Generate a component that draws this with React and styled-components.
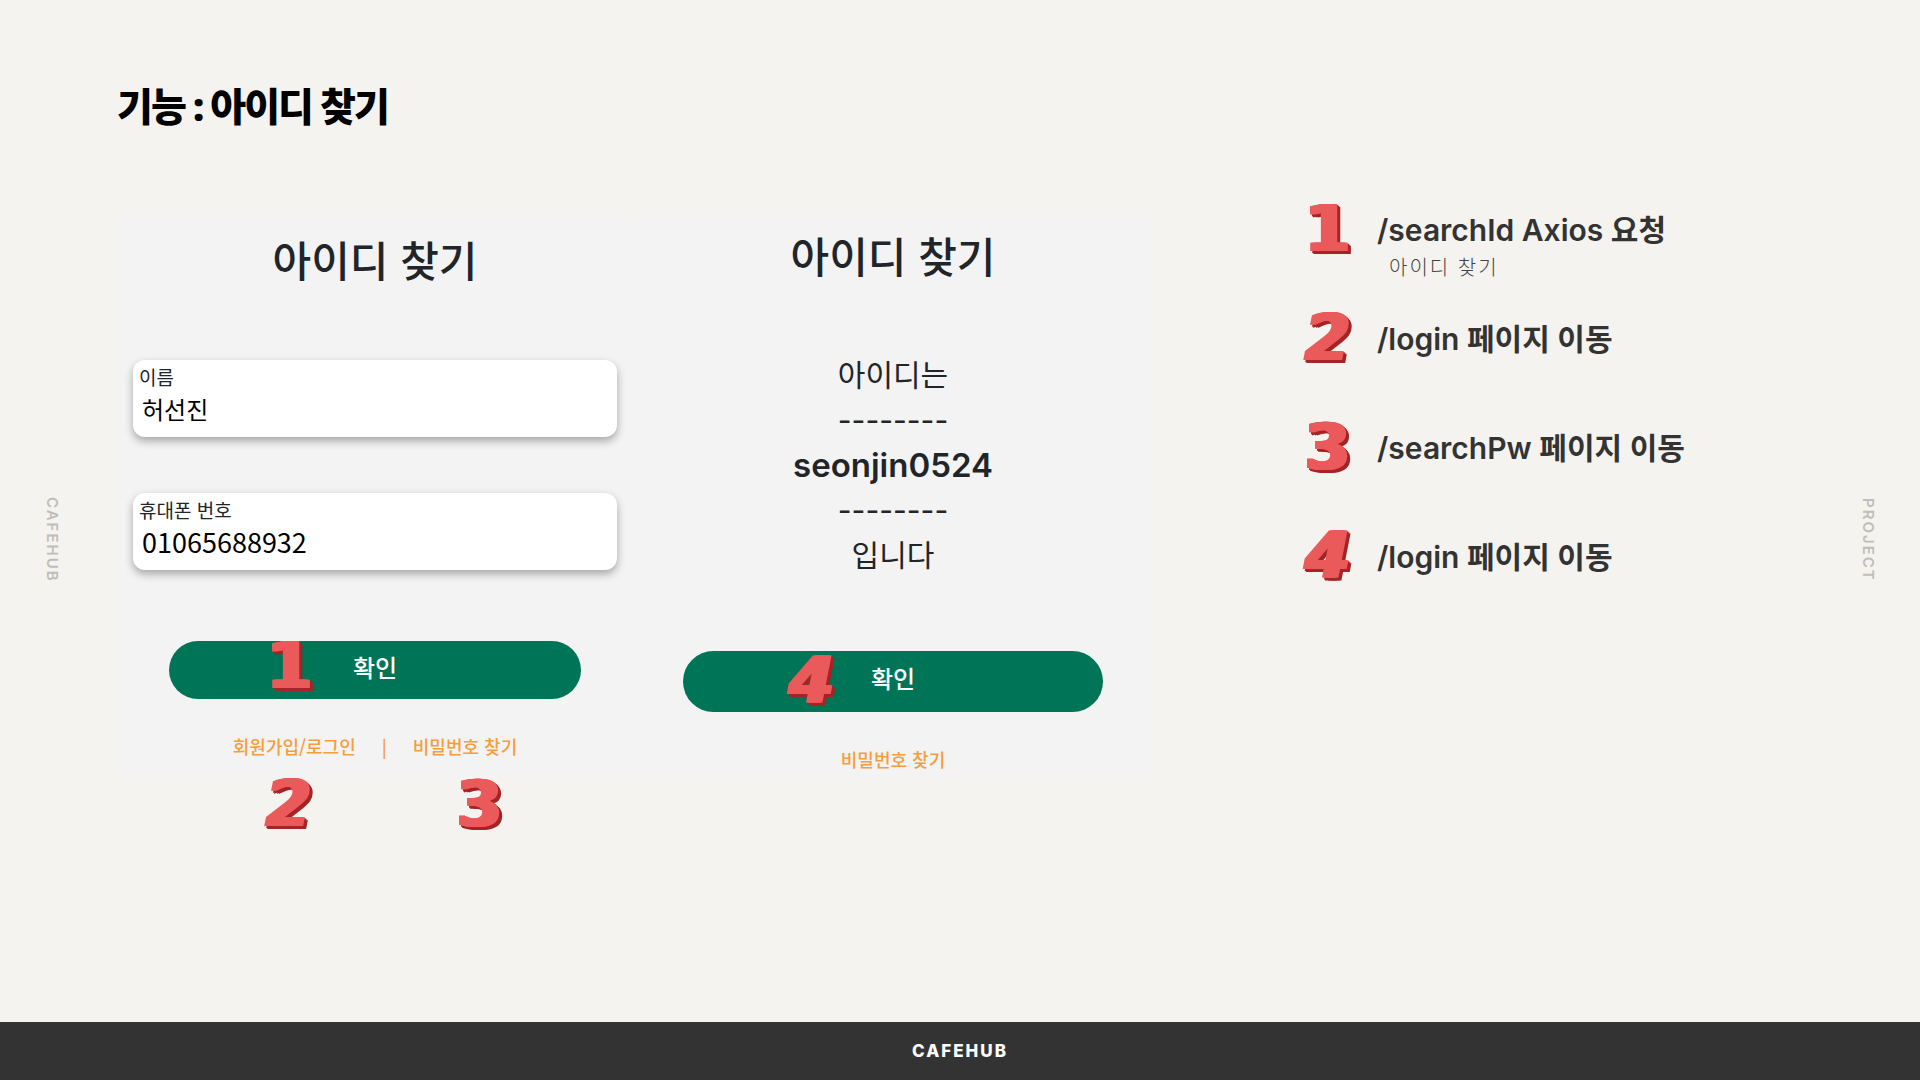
import React from "react";
import styled, { createGlobalStyle } from "styled-components";

const GlobalStyle = createGlobalStyle`
  * { box-sizing: border-box; }
  body {
    margin: 0;
    background: #f5f3ef;
    font-family: Inter, "Noto Sans CJK KR", sans-serif;
  }
  h1, h2, p, ol { margin: 0; padding: 0; }
`;

const korean = `"Noto Sans CJK KR", sans-serif`;

const Page = styled.div`
  min-height: 100vh;
  display: grid;
  grid-template-columns: 117px minmax(0, 1fr) 117px;
  grid-template-rows: 1fr 58px;
`;

const Side = styled.aside`
  display: flex;
  align-items: center;
  justify-content: ${(p) => (p.$end ? "flex-end" : "flex-start")};
  padding: 58px 42px 0;
  color: #bfbeba;
  font-size: 15px;
  line-height: 20px;
  font-weight: 600;
  letter-spacing: 2px;
`;

const SideText = styled.span`
  writing-mode: vertical-rl;
`;

const Content = styled.main`
  padding-top: 82px;
`;

const PageTitle = styled.h1`
  color: #000;
  font-family: "Noto Sans", ${korean};
  font-size: 39px;
  line-height: 48px;
  font-weight: 900;
  letter-spacing: -2px;
`;

const Columns = styled.div`
  display: grid;
  grid-template-columns: minmax(0, 1034fr) minmax(0, 500fr);
  gap: 152px;
  align-items: start;
  margin-top: 74px;
`;

const Screens = styled.div`
  display: grid;
  grid-template-columns: 1fr 1fr;
  gap: 2px;
  padding-top: 13px;
`;

const Screen = styled.section`
  position: relative;
  display: flex;
  flex-direction: column;
  padding: ${(p) => p.$padding};
  background: #f3f3f3;
  color: #212529;
  font-family: ${korean};
`;

const ScreenTitle = styled.h2`
  font-size: 42px;
  line-height: 48px;
  font-weight: 500;
  text-align: center;
`;

const Fields = styled.div`
  display: flex;
  flex-direction: column;
  gap: 56px;
  margin: 77px 16px 71px;
`;

const Field = styled.label`
  display: block;
  padding: 5px 6px 10px;
  border-radius: 12px;
  background: #fff;
  box-shadow: 0 4px 8px rgba(0, 0, 0, 0.32);
  font-size: 19px;
  line-height: 24px;
`;

const Input = styled.input`
  display: block;
  width: 100%;
  height: 38px;
  padding: 0 3px;
  border: 0;
  outline: 0;
  background: transparent;
  color: #000;
  font-family: ${korean};
  font-size: ${(p) => (p.type === "tel" ? 27 : 24)}px;
`;

const Confirm = styled.button`
  height: ${(p) => p.$height};
  margin: 0 ${(p) => p.$inset};
  padding: 0 0 8px;
  border: 0;
  border-radius: 32px;
  background: #007456;
  color: #fff;
  font-family: ${korean};
  font-size: 24px;
  font-weight: 500;
`;

const Links = styled.nav`
  display: flex;
  justify-content: center;
  gap: 26px;
  margin-top: 35px;
  color: #f79d3c;
  font-size: 18px;
  line-height: 24px;
  font-weight: 500;
`;

const Link = styled.a`
  color: inherit;
  text-decoration: none;
`;

const Result = styled.div`
  margin: 74px 0 73px;
  font-family: Inter, ${korean};
  font-size: 30px;
  line-height: 45px;
  text-align: center;
`;

const UserId = styled.p`
  font-size: 33px;
  font-weight: 600;
`;

const Digit = styled.span`
  display: block;
  width: 50px;
  height: 50px;
  color: #eb5a5a;
  font-family: "DejaVu Sans", sans-serif;
  font-size: 64px;
  line-height: 50px;
  font-weight: 700;
  font-style: ${(p) => (p.children % 2 ? "normal" : "italic")};
  text-align: center;
  text-shadow:
    -3px 0 #eb5a5a, -2px 0 #eb5a5a, -1px 0 #eb5a5a, 1px 0 #eb5a5a, 2px 0 #eb5a5a,
    1px 1px #a52427, 2px 1px #a52427, 3px 1px #a52427,
    -1px 2px #a52427, 2px 2px #a52427, 4px 2px #a52427,
    0 3px #a52427, 3px 3px #a52427, 5px 3px #a52427;
`;

const PinnedDigit = styled(Digit)`
  position: absolute;
  left: ${(p) => p.$left};
  top: ${(p) => p.$top};
  pointer-events: none;
`;

const Steps = styled.ol`
  display: flex;
  flex-direction: column;
  list-style: none;
`;

const Step = styled.li`
  display: flex;
  gap: 24px;
  height: 109px;
`;

const StepTitle = styled.p`
  padding-top: 8px;
  color: #333;
  font-size: 30px;
  line-height: 36px;
  font-weight: 600;
  white-space: nowrap;
`;

const StepNote = styled.p`
  padding: 4px 0 0 12px;
  color: #444;
  font-family: ${korean};
  font-size: 20px;
  line-height: 30px;
  font-weight: 300;
  letter-spacing: 2px;
`;

const Footer = styled.footer`
  grid-column: 1 / -1;
  display: flex;
  align-items: center;
  justify-content: center;
  background: #333;
  color: #fff;
  font-size: 17px;
  font-weight: 800;
  letter-spacing: 2px;
`;

const steps = [
  { title: "/searchId Axios 요청", note: "아이디 찾기" },
  { title: "/login 페이지 이동" },
  { title: "/searchPw 페이지 이동" },
  { title: "/login 페이지 이동" },
];

export default function App() {
  return (
    <>
      <GlobalStyle />
      <Page lang="ko">
        <Side>
          <SideText>CAFEHUB</SideText>
        </Side>
        <Content>
          <PageTitle>기능 : 아이디 찾기</PageTitle>
          <Columns>
            <Screens>
              <Screen $padding="18px 0 19px">
                <ScreenTitle>아이디 찾기</ScreenTitle>
                <Fields>
                  <Field>
                    이름
                    <Input type="text" defaultValue="허선진" />
                  </Field>
                  <Field>
                    휴대폰 번호
                    <Input type="tel" defaultValue="01065688932" />
                  </Field>
                </Fields>
                <Confirm type="button" $height="58px" $inset="52px">
                  확인
                </Confirm>
                <Links>
                  <Link href="#login">회원가입/로그인</Link>
                  <span>|</span>
                  <Link href="#password">비밀번호 찾기</Link>
                </Links>
                <PinnedDigit $left="148px" $top="424px">1</PinnedDigit>
                <PinnedDigit $left="147px" $top="562px">2</PinnedDigit>
                <PinnedDigit $left="338px" $top="562px">3</PinnedDigit>
              </Screen>
              <Screen $padding="14px 0 7px">
                <ScreenTitle>아이디 찾기</ScreenTitle>
                <Result>
                  <p>아이디는</p>
                  <p>--------</p>
                  <UserId>seonjin0524</UserId>
                  <p>--------</p>
                  <p>입니다</p>
                </Result>
                <Confirm type="button" $height="61px" $inset="48px">
                  확인
                </Confirm>
                <Links>
                  <Link href="#password">비밀번호 찾기</Link>
                </Links>
                <PinnedDigit $left="152px" $top="439px">4</PinnedDigit>
              </Screen>
            </Screens>
            <Steps>
              {steps.map((step, i) => (
                <Step key={i}>
                  <Digit>{i + 1}</Digit>
                  <div>
                    <StepTitle>{step.title}</StepTitle>
                    {step.note && <StepNote>{step.note}</StepNote>}
                  </div>
                </Step>
              ))}
            </Steps>
          </Columns>
        </Content>
        <Side $end>
          <SideText>PROJECT</SideText>
        </Side>
        <Footer>CAFEHUB</Footer>
      </Page>
    </>
  );
}
